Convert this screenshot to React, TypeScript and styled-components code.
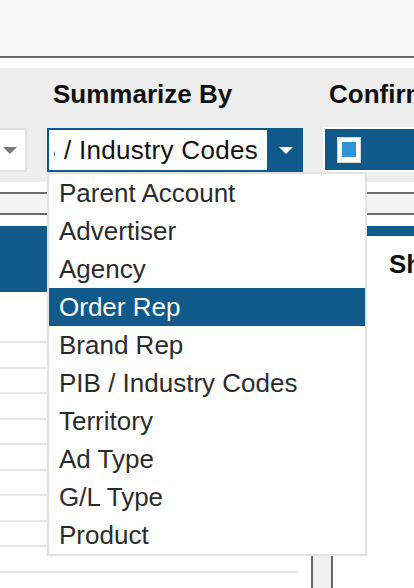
import styled, { createGlobalStyle } from 'styled-components';

const GlobalStyle = createGlobalStyle`
  html, body {
    margin: 0;
    padding: 0;
    background: #ffffff;
  }
  body {
    font-family: "Liberation Sans", Arial, Helvetica, sans-serif;
    overflow: hidden;
  }
  * {
    box-sizing: border-box;
  }
`;

const options = [
  'Parent Account',
  'Advertiser',
  'Agency',
  'Order Rep',
  'Brand Rep',
  'PIB / Industry Codes',
  'Territory',
  'Ad Type',
  'G/L Type',
  'Product',
];

const selected = 'Order Rep';

export default function App() {
  return (
    <>
      <GlobalStyle />
      <Page>
        <TopBar />

        <FilterBar>
          <FilterGroup>
            <Label />
            <StubSelect>
              <Caret color="#777777" />
            </StubSelect>
          </FilterGroup>

          <FilterGroup $relative>
            <Label>Summarize By</Label>
            <Select>
              <SelectValue>
                <ValueClip>
                  <span>PIB / Industry Codes</span>
                </ValueClip>
              </SelectValue>
              <SelectArrow>
                <Caret color="#ffffff" />
              </SelectArrow>
            </Select>

            <Dropdown>
              {options.map((opt) => (
                <Option key={opt} $active={opt === selected}>
                  {opt}
                </Option>
              ))}
            </Dropdown>
          </FilterGroup>

          <FilterGroup>
            <Label>Confirmed Only</Label>
            <ConfirmBox>
              <Checkbox>
                <CheckFill />
              </Checkbox>
            </ConfirmBox>
          </FilterGroup>
        </FilterBar>

        <TabStrip />

        <Content>
          <Table>
            <TableHead />
            <Row $first />
            {Array.from({ length: 9 }).map((_, i) => (
              <Row key={i} />
            ))}
          </Table>

          <Splitter />

          <SidePanel>
            <PanelTitle>Show Detail</PanelTitle>
          </SidePanel>
        </Content>
      </Page>
    </>
  );
}

function Caret({ color }: { color: string }) {
  return (
    <svg width="14" height="7" viewBox="0 0 14 7">
      <polygon points="0,0 14,0 7,7" fill={color} />
    </svg>
  );
}

const Page = styled.div`
  width: 414px;
  height: 588px;
  overflow: hidden;
  display: flex;
  flex-direction: column;
`;

const TopBar = styled.div`
  height: 58px;
  flex-shrink: 0;
  background: #f6f6f6;
  border-bottom: 2px solid #6b6b6b;
  margin-bottom: 10px;
`;

const FilterBar = styled.div`
  flex-shrink: 0;
  height: 114px;
  background: #eeeeee;
  display: flex;
  align-items: flex-start;
  gap: 20px;
  padding-top: 11px;
`;

const FilterGroup = styled.div<{ $relative?: boolean }>`
  position: ${(p) => (p.$relative ? 'relative' : 'static')};
  display: flex;
  flex-direction: column;
  flex-shrink: 0;
`;

const Label = styled.div`
  height: 30px;
  line-height: 30px;
  padding-left: 6px;
  font-size: 26px;
  font-weight: 700;
  color: #111111;
  white-space: nowrap;
  margin-bottom: 19px;
`;

const StubSelect = styled.div`
  width: 27px;
  height: 44px;
  background: #ffffff;
  border: 2px solid #e2e2e2;
  border-left: none;
  display: flex;
  align-items: center;
  padding-left: 3px;
`;

const Select = styled.div`
  width: 256px;
  height: 44px;
  border: 2px solid #0f5a8a;
  background: #0f5a8a;
  display: flex;
`;

const SelectValue = styled.div`
  flex: 1;
  min-width: 0;
  background: #ffffff;
  display: flex;
  align-items: center;
  padding: 0 9px 0 5px;
`;

const ValueClip = styled.div`
  flex: 1;
  min-width: 0;
  overflow: hidden;
  display: flex;
  justify-content: flex-end;
  font-size: 26px;
  letter-spacing: 0.3px;
  color: #111111;
  white-space: nowrap;

  span {
    flex-shrink: 0;
  }
`;

const SelectArrow = styled.div`
  width: 34px;
  display: flex;
  align-items: center;
  justify-content: center;
  padding-left: 3px;
`;

const Dropdown = styled.div`
  position: absolute;
  top: 100%;
  left: 0;
  width: 320px;
  background: #ffffff;
  border: 2px solid #e2e2e2;
  z-index: 10;
`;

const Option = styled.div<{ $active?: boolean }>`
  height: 38px;
  line-height: 38px;
  padding-left: 10px;
  font-size: 26px;
  white-space: nowrap;
  color: ${(p) => (p.$active ? '#ffffff' : '#2b2b2b')};
  background: ${(p) => (p.$active ? '#0f5a8a' : 'transparent')};
`;

const ConfirmBox = styled.div`
  width: 200px;
  height: 45px;
  margin-top: -1px;
  border: 2px solid #ffffff;
  background: #0f5a8a;
  display: flex;
  align-items: center;
  padding-left: 12px;
`;

const Checkbox = styled.div`
  width: 24px;
  height: 26px;
  background: #ffffff;
  border: 1px solid #d6d6d6;
  display: flex;
  align-items: center;
  justify-content: center;
`;

const CheckFill = styled.div`
  width: 14px;
  height: 15px;
  background: #2d95d5;
`;

const TabStrip = styled.div`
  flex-shrink: 0;
  height: 23px;
  margin-top: 10px;
  background: #f4f4f4;
  border-top: 2px solid #6b6b6b;
  border-bottom: 2px solid #6b6b6b;
`;

const Content = styled.div`
  flex: 1;
  margin-top: 11px;
  display: flex;
`;

const Table = styled.div`
  width: 299px;
  flex-shrink: 0;
  display: flex;
  flex-direction: column;
`;

const TableHead = styled.div`
  height: 66px;
  background: #0f5a8a;
`;

const Row = styled.div<{ $first?: boolean }>`
  height: ${(p) => (p.$first ? '51px' : '25.5px')};
  border-bottom: 2px solid #e8e8e8;
`;

const Splitter = styled.div`
  width: 22px;
  margin-left: 12px;
  flex-shrink: 0;
  background: #f0f0f0;
  border-left: 2px solid #666666;
  border-right: 2px solid #666666;
`;

const SidePanel = styled.div`
  flex: 1;
  margin-left: 12px;
  border-top: 10px solid #0f5a8a;
  padding-left: 44px;
  padding-top: 13px;
  white-space: nowrap;
`;

const PanelTitle = styled.div`
  font-size: 26px;
  line-height: 30px;
  font-weight: 700;
  color: #111111;
`;
